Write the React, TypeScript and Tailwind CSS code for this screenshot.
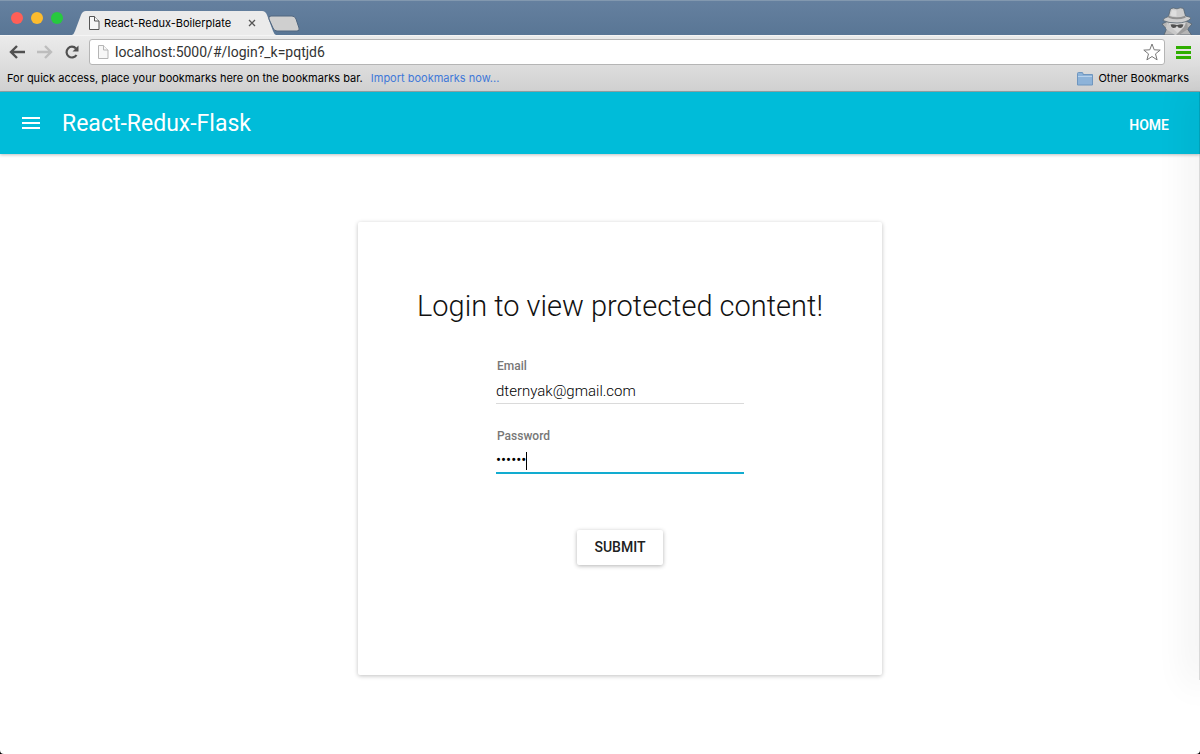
import { useState } from "react"

function DocumentIcon({ className, stroke }: { className: string; stroke: string }) {
  return (
    <svg viewBox="0 0 12 14" className={className} fill="#f7f7f7" stroke={stroke} aria-hidden="true">
      <path d="M1.500 0.500h5l4.500 4.500v8.500h-9.500z" />
      <path d="M6.500 0.500v4.500h4.500" />
    </svg>
  )
}

function IncognitoIcon() {
  return (
    <svg viewBox="0 0 34 28" className="h-7 w-[34px]" aria-hidden="true">
      <path d="M4 28l2.500-6-4.500-5 6-3 9 4 9-4 6 3-4.500 5 4 6z" fill="#b5b5b5" stroke="#56636f" strokeWidth="0.8" />
      <path d="M8 13h18l-2 8-7 7-7-7z" fill="#d8d8d8" />
      <path d="M7 15l-1 7 9 6h5l-9-8z" fill="#c9c9c9" />
      <path d="M27 15l1 7-9 6h-3l8-8z" fill="#9c9c9c" />
      <path d="M10.500 17.500q3.500-.5 6.500.6 3-1.100 6.500-.6-.8 3.500-3.300 3.500-2.300 0-3.200-2.300-1 2.300-3.200 2.300-2.500 0-3.300-3.500z" fill="#505050" />
      <path d="M3 13.500q5 2.500 14 2.500t14-4.500q-.5-1.700-5.500-2.500L23.500 1.500q-3-1.500-6.500.3-4-1.600-6.500 0L8.500 9.500Q3 11 3 13.500z" fill="#cdcdcd" stroke="#56636f" strokeWidth="0.8" />
      <path d="M8.700 8.800q8 3 16.500 0l.4 2q-8.500 3-17.300 0z" fill="#919191" />
      <path d="M12 3l-1.500 5.500 6 1V3.500z" fill="#dedede" />
    </svg>
  )
}

function BrowserTabs() {
  return (
    <div className="flex h-[35px] items-end justify-between border-t border-[#8298af] bg-linear-to-b from-[#65809f] to-[#597695] pr-[6px] pl-[11px]">
      <div className="flex items-end">
        <div className="flex h-[34px] items-center gap-2">
          <span className="size-3 rounded-full bg-[#ff5f57]" />
          <span className="size-3 rounded-full bg-[#fdbc2e]" />
          <span className="size-3 rounded-full bg-[#27c93f]" />
        </div>
        <div className="ml-[9px] flex h-6 items-stretch">
          <svg viewBox="0 0 16 24" className="h-6 w-4" aria-hidden="true">
            <path d="M0 24Q2 23 3 20L9 4Q10.500 0 14 0H16V24z" fill="#ebebeb" />
          </svg>
          <div className="flex items-center bg-[#ebebeb]">
            <DocumentIcon className="h-[14px] w-3" stroke="#555" />
            <span className="ml-1 w-[140px] text-[11px] text-black">React-Redux-Boilerplate</span>
            <button type="button" aria-label="Close tab" className="flex h-4 w-4 items-center justify-center">
              <svg viewBox="0 0 8 8" className="size-2" stroke="#555" strokeWidth="1.3" aria-hidden="true">
                <path d="M1 1l6 6M7 1l-6 6" />
              </svg>
            </button>
          </div>
          <svg viewBox="0 0 16 24" className="h-6 w-4" aria-hidden="true">
            <path d="M16 24Q14 23 13 20L7 4Q5.500 0 2 0H0V24z" fill="#ebebeb" />
          </svg>
        </div>
        <button type="button" aria-label="New tab" className="-ml-2 pb-[3px]">
          <svg viewBox="0 0 32 17" className="h-[17px] w-8" aria-hidden="true">
            <path d="M3 1h21q3 0 4 3l3 9q1 3-2 3H9q-3 0-4-3L1 4q-1-3 2-3z" fill="#cfcfcf" stroke="#50667f" />
          </svg>
        </button>
      </div>
      <IncognitoIcon />
    </div>
  )
}

function Toolbar() {
  const [url, setUrl] = useState("localhost:5000/#/login?_k=pqtjd6")

  return (
    <div className="flex h-[33px] items-center border-t border-[#f5f5f5] bg-linear-to-b from-[#ebebeb] to-[#dcdcdc] px-[9px]">
      <div className="flex w-20 items-center gap-3">
        <button type="button" aria-label="Back">
          <svg viewBox="0 0 16 14" className="h-[14px] w-4" fill="none" stroke="#505050" strokeWidth="2.4" aria-hidden="true">
            <path d="M8 1L2 7l6 6M2 7h14" />
          </svg>
        </button>
        <button type="button" aria-label="Forward">
          <svg viewBox="0 0 16 14" className="h-[14px] w-4" fill="none" stroke="#bdbdbd" strokeWidth="2.4" aria-hidden="true">
            <path d="M8 1l6 6-6 6M14 7H0" />
          </svg>
        </button>
        <button type="button" aria-label="Reload">
          <svg viewBox="0 0 14 14" className="size-[14px]" fill="none" stroke="#505050" strokeWidth="2.2" aria-hidden="true">
            <path d="M11.500 10A5.400 5.400 0 1 1 11 3.500" />
            <path d="M13.500 0.500v6h-6z" fill="#505050" stroke="none" />
          </svg>
        </button>
      </div>
      <div className="flex h-[26px] flex-1 items-center rounded-[3px] border border-[#b5b5b5] bg-white px-[3px]">
        <DocumentIcon className="ml-1 h-4 w-3" stroke="#b5b5b5" />
        <input
          type="text"
          aria-label="Address"
          value={url}
          onChange={(e) => setUrl(e.target.value)}
          className="ml-[6px] flex-1 bg-transparent font-['Roboto',sans-serif] text-[14px] text-[#333] outline-none"
        />
        <button type="button" aria-label="Bookmark this page">
          <svg viewBox="0 0 18 18" className="size-[18px]" fill="#fff" stroke="#777" aria-hidden="true">
            <path d="M9 1l2.200 5.800 6 .3-4.700 3.800 1.600 6L9 13.500l-5.100 3.400 1.600-6L.8 7.100l6-.3z" />
          </svg>
        </button>
      </div>
      <button type="button" aria-label="Browser menu" className="ml-[11px] flex w-[15px] flex-col gap-[2px]">
        <span className="h-[3px] bg-[#2fae00]" />
        <span className="h-[3px] bg-[#2fae00]" />
        <span className="h-[3px] bg-[#2fae00]" />
      </button>
    </div>
  )
}

function BookmarksBar() {
  return (
    <div className="flex h-6 items-center justify-between border-b border-[#8fa5a8] bg-linear-to-b from-[#dcdcdc] to-[#d0d0d0] pr-[11px] pb-[2px] pl-[7px] text-[11px]">
      <p className="text-black">
        For quick access, place your bookmarks here on the bookmarks bar.
        <a href="#import" className="ml-2 text-[#3f78d8]">Import bookmarks now...</a>
      </p>
      <button type="button" className="flex items-center gap-[5px] text-black">
        <svg viewBox="0 0 16 14" className="h-[14px] w-4" aria-hidden="true">
          <path d="M0.500 3V1.500q0-1 1-1H5q1 0 1 1v1h9.500v10.500H.5z" fill="#8db3d9" stroke="#6f96bf" />
          <path d="M1 4.500h14" stroke="#b8d2ec" />
        </svg>
        Other Bookmarks
      </button>
    </div>
  )
}

function AppHeader() {
  return (
    <header className="flex h-[62px] items-center bg-[#00bcd9] pr-[31px] pl-[22px] text-white shadow-[0_1px_3px_rgba(0,0,0,0.25)]">
      <button type="button" aria-label="Open menu" className="flex w-[18px] flex-col gap-[3px]">
        <span className="h-[2px] bg-white" />
        <span className="h-[2px] bg-white" />
        <span className="h-[2px] bg-white" />
      </button>
      <h1 className="ml-[22px] flex-1 pt-[2px] text-[23px]">React-Redux-Flask</h1>
      <a href="#home" className="pt-1 text-[14px] font-semibold">HOME</a>
    </header>
  )
}

function LoginCard() {
  const [email, setEmail] = useState("dternyak@gmail.com")
  const [password, setPassword] = useState("secret")

  return (
    <form
      onSubmit={(e) => e.preventDefault()}
      className="mt-[68px] ml-[calc(50%-242px)] flex w-[524px] flex-col items-center rounded-[2px] bg-white pt-16 pb-[110px] shadow-[0_1px_4px_rgba(0,0,0,0.25)]"
    >
      <h2 className="text-[29px] leading-10 font-light text-[#111]">Login to view protected content!</h2>
      <div className="mt-8 flex w-[248px] flex-col">
        <label htmlFor="email" className="pl-px text-[12px] leading-4 font-medium text-[#777]">Email</label>
        <input
          id="email"
          type="email"
          value={email}
          onChange={(e) => setEmail(e.target.value)}
          className="mt-1 h-[26px] border-b border-[#dadada] text-[15px] font-light text-black outline-none"
        />
      </div>
      <div className="mt-6 flex w-[248px] flex-col">
        <label htmlFor="password" className="pl-px text-[12px] leading-4 font-medium text-[#777]">Password</label>
        <div className="relative mt-1">
          <input
            id="password"
            type="password"
            value={password}
            onChange={(e) => setPassword(e.target.value)}
            className="block h-[26px] w-full border-b-2 border-[#12acd0] text-[15px] text-black outline-none"
          />
          <span className="absolute top-1 left-[30px] h-[18px] w-px bg-black" />
        </div>
      </div>
      <button type="submit" className="mt-14 h-[35px] w-[86px] rounded-[2px] bg-white text-[14px] font-medium text-[#212121] shadow-[0_1px_4px_rgba(0,0,0,0.3)]">
        SUBMIT
      </button>
    </form>
  )
}

export default function App() {
  return (
    <div className="bg-black font-['Roboto',sans-serif]">
      <div className="relative min-h-screen overflow-hidden rounded-b-[4px] bg-white">
        <div className="font-['Inter',sans-serif]">
          <BrowserTabs />
          <Toolbar />
          <BookmarksBar />
        </div>
        <AppHeader />
        <main>
          <LoginCard />
        </main>
        {/* Shadow cast by the neighbouring window */}
        <div className="pointer-events-none absolute top-[92px] right-0 bottom-[74px] w-px bg-black/15 shadow-[0_0_36px_4px_rgba(0,0,0,0.16)]" />
      </div>
    </div>
  )
}
